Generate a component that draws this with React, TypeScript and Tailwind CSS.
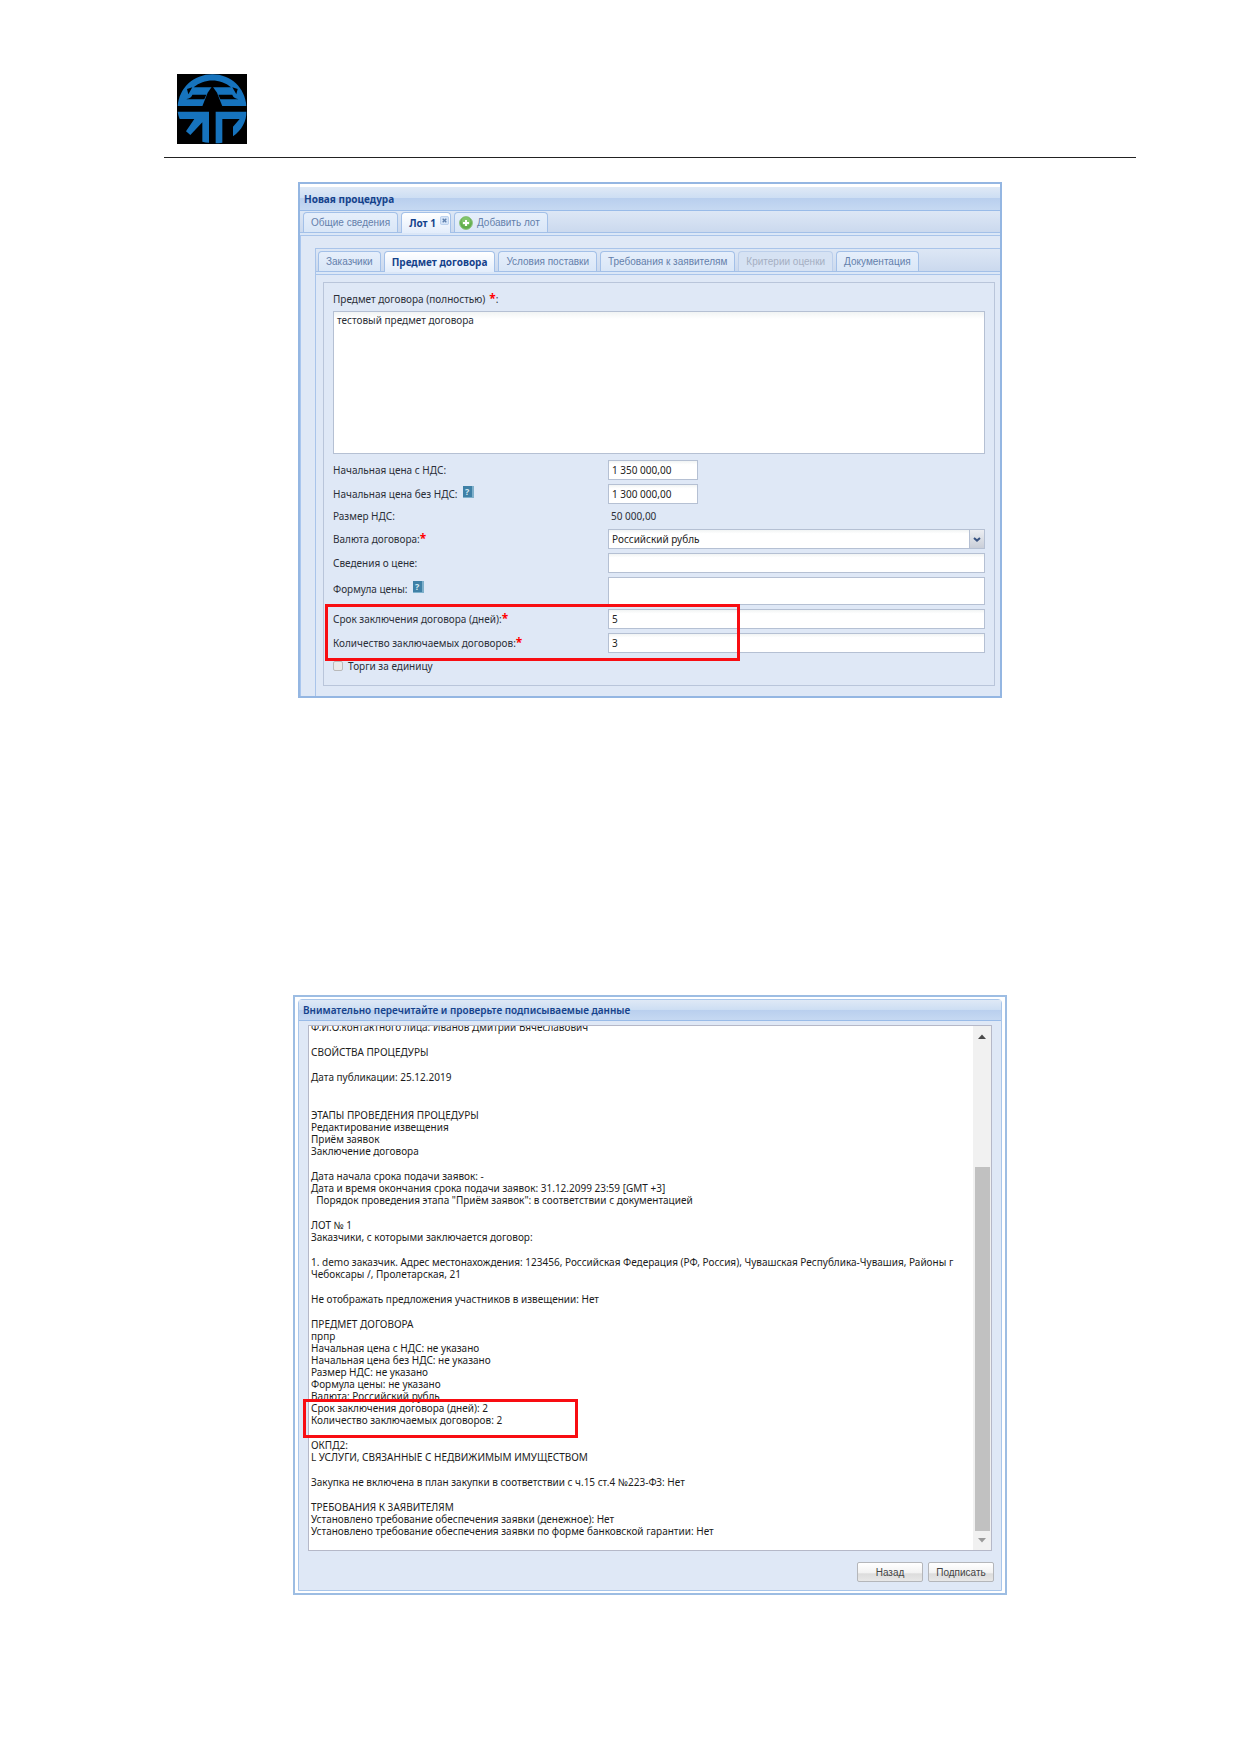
import type { ReactNode } from "react";

const lotTabs = [
  { title: "Заказчики", active: false, disabled: false },
  { title: "Предмет договора", active: true, disabled: false },
  { title: "Условия поставки", active: false, disabled: false },
  { title: "Требования к заявителям", active: false, disabled: false },
  { title: "Критерии оценки", active: false, disabled: true },
  { title: "Документация", active: false, disabled: false },
];

const sections = [
  ["Ф.И.О.контактного лица: Иванов Дмитрий Вячеславович"],
  ["СВОЙСТВА ПРОЦЕДУРЫ"],
  ["Дата публикации: 25.12.2019"],
  [],
  [
    "ЭТАПЫ ПРОВЕДЕНИЯ ПРОЦЕДУРЫ",
    "Редактирование извещения",
    "Приём заявок",
    "Заключение договора",
  ],
  [
    "Дата начала срока подачи заявок: -",
    "Дата и время окончания срока подачи заявок: 31.12.2099 23:59 [GMT +3]",
    "  Порядок проведения этапа \"Приём заявок\": в соответствии с документацией",
  ],
  ["ЛОТ № 1", "Заказчики, с которыми заключается договор:"],
  [
    "1. demo заказчик. Адрес местонахождения: 123456, Российская Федерация (РФ, Россия), Чувашская Республика-Чувашия, Районы г",
    "Чебоксары /, Пролетарская, 21",
  ],
  ["Не отображать предложения участников в извещении: Нет"],
  [
    "ПРЕДМЕТ ДОГОВОРА",
    "прпр",
    "Начальная цена с НДС: не указано",
    "Начальная цена без НДС: не указано",
    "Размер НДС: не указано",
    "Формула цены: не указано",
    "Валюта: Российский рубль",
    "Срок заключения договора (дней): 2",
    "Количество заключаемых договоров: 2",
  ],
  ["ОКПД2:", "L УСЛУГИ, СВЯЗАННЫЕ С НЕДВИЖИМЫМ ИМУЩЕСТВОМ"],
  ["Закупка не включена в план закупки в соответствии с ч.15 ст.4 №223-ФЗ: Нет"],
  [
    "ТРЕБОВАНИЯ К ЗАЯВИТЕЛЯМ",
    "Установлено требование обеспечения заявки (денежное): Нет",
    "Установлено требование обеспечения заявки по форме банковской гарантии: Нет",
  ],
];

const inputClass =
  "h-5 border border-[#b5c0d3] bg-linear-to-b from-[#f1f4f4] to-white to-20% px-[3px] text-[#222] outline-none";

const tabClass =
  "h-5 rounded-t-sm border border-b-0 border-[#a3c0e8] bg-linear-to-b from-[#e6effb] to-[#d9e6f7] px-[7px] font-['Liberation_Sans',sans-serif]";

const disabledTabClass =
  "h-5 rounded-t-sm border border-b-0 border-[#bccfeb] bg-[#d6e2f3] px-[7px] font-['Liberation_Sans',sans-serif] text-[#a5afc2]";

const activeTabClass =
  "-mb-px h-[21px] rounded-t-sm border border-b-0 border-[#a3c0e8] bg-linear-to-b from-white to-[#e3edfb] px-[7px] font-bold text-[#15428b]";

function Logo() {
  return (
    <svg viewBox="0 0 210 210" className="block size-[70px]" aria-hidden="true">
      <rect width="210" height="210" fill="#000" />
      <g fill="#1673bd">
        <path d="M2 96C6 42 50 1 106 1s98 41 102 95z" />
        <path d="M2 113h94v93c-7 0-14-1-20-3v-58l-36 38-13-11 25-37H8C5 128 3 121 2 113z" />
        <path d="M116 113h92c1 28-14 56-40 74v-29l20-23h-52v71c-7 1-13 2-20 2z" />
      </g>
      <g fill="#000">
        <path d="M50 40C82 13 130 13 162 40z" />
        <path d="M46 62h42l-6 14H28c4-3 16-4 18-14z" />
        <path d="M124 62h42c2 10 14 11 18 14h-54z" />
        <path d="M30 45 46 40 34 61z" />
        <path d="M182 45 166 40 178 61z" />
        <path d="M106 36 120 56 136 97H76L92 56z" />
      </g>
    </svg>
  );
}

function CloseMark() {
  return (
    <svg viewBox="0 0 10 10" className="size-[9px]" aria-hidden="true">
      <rect x=".5" y=".5" width="9" height="9" rx="1.5" fill="#d5e4f8" stroke="#b3cbea" />
      <path d="M3 3l4 4M7 3L3 7" stroke="#6080ad" strokeWidth="1.5" />
    </svg>
  );
}

function AddMark() {
  return (
    <svg viewBox="0 0 14 14" className="size-[14px]" aria-hidden="true">
      <circle cx="7" cy="7" r="6.4" fill="#63ae4e" stroke="#8fc37f" />
      <circle cx="7" cy="5.5" r="4.5" fill="#82c56c" />
      <path d="M7 4v6M4 7h6" stroke="#fff" strokeWidth="2" />
    </svg>
  );
}

function HelpMark() {
  return (
    <span className="mb-1 ml-[5px] flex h-3 w-[11px] items-center justify-center border-r-2 border-b border-[#7fb0cb] bg-[#3f80a6] text-[9px] leading-none font-bold text-[#d5e8f2]">
      ?
    </span>
  );
}

function Required() {
  return <span className="text-[12px] leading-none font-bold text-[#f00]">*</span>;
}

function Row({
  id,
  label,
  multiline,
  children,
}: {
  id: string;
  label: ReactNode;
  multiline?: boolean;
  children: ReactNode;
}) {
  return (
    <div className={`grid grid-cols-[275px_1fr] ${multiline ? "items-start" : "items-center"}`}>
      <label htmlFor={id} className={`flex h-4 items-center ${multiline ? "mt-1" : ""}`}>
        {label}
      </label>
      {children}
    </div>
  );
}

function ProcedureWindow() {
  return (
    <section className="mx-auto w-full max-w-[704px] border-2 border-[#94b6e2] bg-white pt-[3px] text-[10px] text-[#2b2f38]">
      <h2 className="flex h-6 items-center border-b border-[#99bbe8] bg-[linear-gradient(#dfe9f6,#cddef3_48%,#b9cfee_50%,#c6d9f2)] px-1 pt-0.5 font-bold text-[#15428b]">
        Новая процедура
      </h2>

      {/* Вкладки лотов */}
      <div className="flex items-end gap-[3px] border-b border-[#a3c0e8] bg-linear-to-b from-[#dde7f5] to-[#cbd9ee] px-[3px] pt-px text-[#6480ab]">
        <button className={tabClass}>Общие сведения</button>
        <button className="-mb-px flex h-[21px] rounded-t-sm border border-b-0 border-[#a3c0e8] bg-linear-to-b from-white to-[#e3edfb] pr-px pl-[7px] font-bold text-[#15428b]">
          <span className="self-center pr-1">Лот 1</span>
          <span className="pt-[3px]">
            <CloseMark />
          </span>
        </button>
        <button className="flex h-5 items-center gap-1 rounded-t-sm border border-b-0 border-[#a3c0e8] bg-linear-to-b from-[#e6effb] to-[#d9e6f7] pr-[7px] pl-1 font-['Liberation_Sans',sans-serif]">
          <AddMark />
          Добавить лот
        </button>
      </div>
      <div className="h-[3px] border-b border-[#a9c4ea] bg-[#dbe7f7]" />

      <div className="border-l border-[#a9c6ee] bg-[#dfe8f6] pt-3 pl-[14px]">
        <div className="border-t border-l border-[#a9c4ea]">
          <div className="flex items-end gap-[3px] border-b border-[#a3c0e8] bg-linear-to-b from-[#dde7f5] to-[#cbd9ee] px-0.5 pt-0.5 text-[#6480ab]">
            {lotTabs.map((tab) => (
              <button
                key={tab.title}
                disabled={tab.disabled}
                className={tab.active ? activeTabClass : tab.disabled ? disabledTabClass : tabClass}
              >
                {tab.title}
              </button>
            ))}
          </div>
          <div className="h-[3px] border-b border-[#a9c4ea] bg-[#dbe7f7]" />

          <div className="pt-[7px] pr-[5px] pb-[10px] pl-[7px]">
            <form className="flex flex-col gap-1 border border-[#b9c5da] px-[9px] pt-2 pb-[10px]">
              <label htmlFor="subject" className="flex h-4 items-center gap-1">
                Предмет договора (полностью)
                <span className="flex items-center">
                  <Required />:
                </span>
              </label>
              <textarea
                id="subject"
                defaultValue="тестовый предмет договора"
                className="mb-0.5 h-[143px] resize-none border border-[#b5c0d3] bg-white bg-linear-to-b from-[#f1f4f4] to-white to-5% px-[3px] py-px outline-none"
              />
              <Row id="price" label="Начальная цена с НДС:">
                <input id="price" defaultValue="1 350 000,00" className={`${inputClass} w-[90px]`} />
              </Row>
              <Row
                id="net"
                label={
                  <>
                    Начальная цена без НДС:
                    <HelpMark />
                  </>
                }
              >
                <input id="net" defaultValue="1 300 000,00" className={`${inputClass} w-[90px]`} />
              </Row>
              <Row id="vat" label="Размер НДС:">
                <output id="vat" className="h-[17px] px-[3px] leading-4">
                  50 000,00
                </output>
              </Row>
              <Row
                id="currency"
                label={
                  <>
                    Валюта договора:
                    <Required />
                  </>
                }
              >
                <div className="relative">
                  <select id="currency" className={`${inputClass} block w-full appearance-none`}>
                    <option>Российский рубль</option>
                  </select>
                  <span className="pointer-events-none absolute inset-y-px right-px flex w-[15px] items-center justify-center border-l border-[#b5c0d3] bg-linear-to-b from-[#eceef2] to-[#c9ced8]">
                    <svg viewBox="0 0 8 5" className="w-2" aria-hidden="true">
                      <path d="M1 1l3 2.6L7 1" fill="none" stroke="#3a5482" strokeWidth="2" />
                    </svg>
                  </span>
                </div>
              </Row>
              <Row id="info" label="Сведения о цене:">
                <input id="info" className={inputClass} />
              </Row>
              <Row
                id="formula"
                multiline
                label={
                  <>
                    Формула цены:
                    <HelpMark />
                  </>
                }
              >
                <textarea
                  id="formula"
                  className="block h-7 resize-none border border-[#b5c0d3] bg-white px-[3px] outline-none"
                />
              </Row>
              <div className="relative flex flex-col gap-1">
                <Row
                  id="term"
                  label={
                    <>
                      Срок заключения договора (дней):
                      <Required />
                    </>
                  }
                >
                  <input id="term" defaultValue="5" className={inputClass} />
                </Row>
                <Row
                  id="count"
                  label={
                    <>
                      Количество заключаемых договоров:
                      <Required />
                    </>
                  }
                >
                  <input id="count" defaultValue="3" className={inputClass} />
                </Row>
                <span className="pointer-events-none absolute -top-[5px] -left-2 z-10 h-[57px] w-[415px] border-[3px] border-[#f80d12]" />
              </div>
              <label className="flex h-[18px] items-center gap-[5px]">
                <input
                  type="checkbox"
                  className="size-[10px] appearance-none rounded-xs border border-[#b9b9b9] bg-[#e9e9e9]"
                />
                Торги за единицу
              </label>
            </form>
          </div>
        </div>
      </div>
    </section>
  );
}

function SignWindow() {
  return (
    <section className="mx-auto w-full max-w-[714px] border-2 border-[#9dbde3] bg-white px-[3px] py-0.5 text-[10px]">
      <div className="rounded-t-sm border border-[#a9c6ea] bg-[#dfe8f6]">
        <h2 className="flex h-[21px] items-center border-b border-[#99bbe8] bg-[linear-gradient(#dfe9f6,#cddef3_48%,#b9cfee_50%,#c6d9f2)] px-1 font-semibold text-[#15428b]">
          Внимательно перечитайте и проверьте подписываемые данные
        </h2>
        <div className="px-[9px] pt-1 pb-2">
          <div className="relative">
            <div className="flex h-[526px] border border-[#b5b8c8] bg-white">
              <div className="flex flex-1 flex-col justify-end gap-[13px] overflow-hidden pb-[13px] pl-0.5 leading-3 whitespace-pre text-[#1c1c1c]">
                {sections.map((lines, index) => (
                  <div key={index}>
                    {lines.map((line) => (
                      <p key={line}>{line}</p>
                    ))}
                  </div>
                ))}
              </div>
              <div className="flex w-[18px] flex-col items-center bg-[#f1f1f1]" aria-hidden="true">
                <svg viewBox="0 0 8 5" className="mt-2 w-2">
                  <path d="M0 5l4-4.5L8 5z" fill="#4a4a4a" />
                </svg>
                <div className="mt-32 w-[15px] flex-1 bg-[#c1c1c1]" />
                <svg viewBox="0 0 8 5" className="my-[7px] w-2">
                  <path d="M0 0l4 4.5L8 0z" fill="#9a9a9a" />
                </svg>
              </div>
            </div>
            <span className="pointer-events-none absolute top-[374px] -left-[5px] h-[39px] w-[275px] border-[3px] border-[#f80d12]" />
          </div>
          <div className="mt-[11px] -mr-0.5 flex justify-end gap-[5px] font-['Liberation_Sans',sans-serif] text-[#444]">
            <button className="h-5 w-[66px] rounded-xs border border-[#b4b6ba] bg-[linear-gradient(#fff,#f2f2f2_55%,#dcdcdc_60%,#e8e8e8)]">
              Назад
            </button>
            <button className="h-5 w-[66px] rounded-xs border border-[#b4b6ba] bg-[linear-gradient(#fff,#f2f2f2_55%,#dcdcdc_60%,#e8e8e8)]">
              Подписать
            </button>
          </div>
        </div>
      </div>
    </section>
  );
}

export default function App() {
  return (
    <div className="min-h-screen bg-white pt-[74px] pr-[103px] pb-[157px] pl-[164px] font-['Noto_Sans','Open_Sans',sans-serif]">
      <header className="border-b border-[#222] pb-[13px] pl-[13px]">
        <Logo />
      </header>
      <main className="flex flex-col gap-[297px] pt-6">
        <ProcedureWindow />
        <SignWindow />
      </main>
    </div>
  );
}
